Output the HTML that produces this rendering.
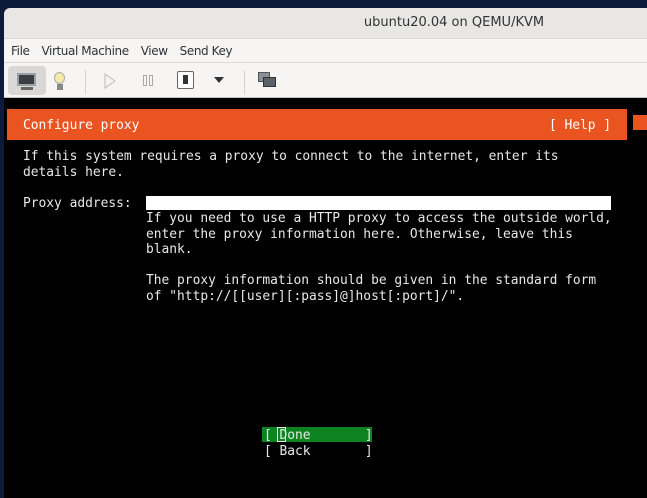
<!DOCTYPE html>
<html><head><style>
*{margin:0;padding:0;box-sizing:border-box}
body{width:647px;height:496px;overflow:hidden;background:#0d1a3a;position:relative;font-family:"DejaVu Sans Mono","Liberation Mono",monospace}
.abs{position:absolute}
#win{left:4px;top:8px;width:650px;height:490px;background:#000;border-radius:6px 0 0 0;overflow:hidden}
#title{left:0;top:0;width:100%;height:30px;background:#e9e7e4;font-family:"DejaVu Sans","Liberation Sans",sans-serif;font-size:13px;color:#2e3436;text-align:center;line-height:30px;padding-left:250px}
#menu{left:0;top:30px;width:100%;height:24px;background:#f6f5f4;font-family:"DejaVu Sans","Liberation Sans",sans-serif;font-size:12px;color:#2e3436;line-height:24px;border-top:1px solid #dcdad7}
#menu span{margin-left:7px;margin-right:5px;letter-spacing:-0.4px}
#tb{left:0;top:54px;width:100%;height:36px;background:#f6f5f4;border-top:1px solid #dcdad7;border-bottom:1px solid #c0bdb8}
.t{font-size:12.9px;color:#e8e8e8;white-space:pre;line-height:15.5px}
</style></head><body>
<div id="win" class="abs">
<div id="title" class="abs">ubuntu20.04 on QEMU/KVM</div>
<div id="menu" class="abs"><span>File</span><span>Virtual Machine</span><span>View</span><span>Send Key</span></div>
<div id="tb" class="abs">
 <div class="abs" style="left:4px;top:3px;width:38px;height:29px;background:#dad8d5;border-radius:4px"></div>
 <div class="abs" style="left:13px;top:10px;width:19px;height:13px;background:#3a3f45;border:2px solid #9aa0a6"></div>
 <div class="abs" style="left:17px;top:24px;width:12px;height:3px;background:#666"></div>
 <div class="abs" style="left:50px;top:9px;width:11px;height:12px;border-radius:50%;background:#f2eba8;border:1px solid #aaa"></div>
 <div class="abs" style="left:53px;top:21px;width:6px;height:6px;background:#888"></div>
 <div class="abs" style="left:81px;top:7px;width:1px;height:24px;background:#d5d2ce"></div>
 <svg class="abs" style="left:100px;top:10px" width="12" height="16"><path d="M1 1L11 8L1 15Z" fill="none" stroke="#bbb"/></svg>
 <div class="abs" style="left:139px;top:12px;width:4px;height:11px;border:1px solid #aaa"></div>
 <div class="abs" style="left:145px;top:12px;width:4px;height:11px;border:1px solid #aaa"></div>
 <div class="abs" style="left:173px;top:8px;width:17px;height:18px;border:1px solid #666;border-radius:2px;background:#fff"></div>
 <div class="abs" style="left:179px;top:12px;width:5px;height:9px;background:#333"></div>
 <svg class="abs" style="left:210px;top:14px" width="10" height="6"><path d="M0 0H10L5 6Z" fill="#2e3436"/></svg>
 <div class="abs" style="left:240px;top:7px;width:1px;height:24px;background:#d5d2ce"></div>
 <div class="abs" style="left:254px;top:9px;width:12px;height:10px;background:#8a9096;border:1px solid #555"></div>
 <div class="abs" style="left:259px;top:14px;width:13px;height:10px;background:#5a6168;border:1px solid #333"></div>
</div>
</div>
<div class="abs" style="left:7px;top:109px;width:620px;height:31px;background:#e95420"></div>
<div class="abs" style="left:633px;top:115px;width:14px;height:15px;background:#e95420"></div>
<div class="abs t" style="left:23px;top:118px;color:#fff">Configure proxy</div>
<div class="abs t" style="left:549px;top:118px;color:#fff">[ Help ]</div>
<div class="abs t" style="left:23px;top:149px">If this system requires a proxy to connect to the internet, enter its
details here.</div>
<div class="abs t" style="left:23px;top:196px">Proxy address:</div>
<div class="abs" style="left:146px;top:196px;width:465px;height:14px;background:#fff"></div>
<div class="abs t" style="left:146px;top:211px">If you need to use a HTTP proxy to access the outside world,
enter the proxy information here. Otherwise, leave this
blank.

The proxy information should be given in the standard form
of "http://[[user][:pass]@]host[:port]/".</div>
<div class="abs" style="left:262px;top:427px;width:110px;height:15px;background:#0e8420"></div>
<div class="abs" style="left:277px;top:427px;width:9px;height:15px;border:1px solid #e8e8e8"></div>
<div class="abs t" style="left:264px;top:428px">[ Done       ]
[ Back       ]</div>
</body></html>
